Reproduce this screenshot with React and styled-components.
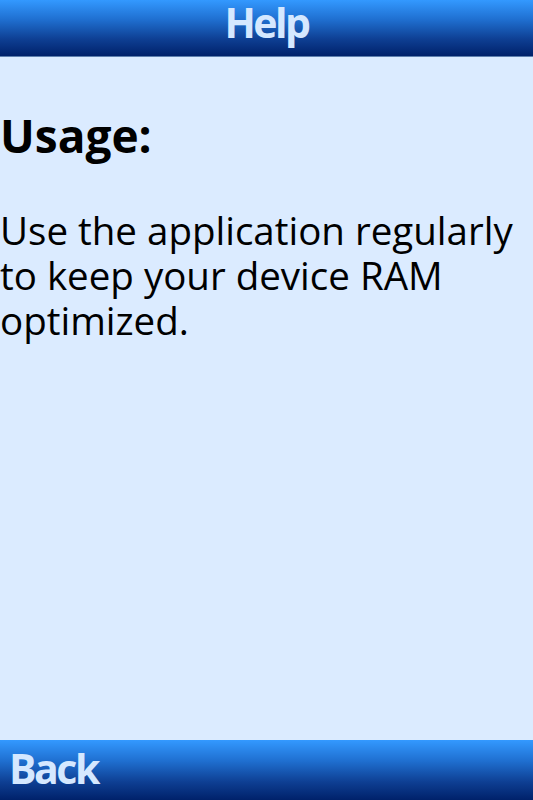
import React from 'react';
import styled, { createGlobalStyle } from 'styled-components';

const Global = createGlobalStyle`
  html, body { margin: 0; height: 100%; }
  body { background: #dbebff; font-family: "Open Sans", "DejaVu Sans", sans-serif; }
  #root { height: 100%; }
`;

const Screen = styled.div`
  display: flex;
  flex-direction: column;
  height: 100vh;
  background: #dbebff;
`;

const Bar = styled.div`
  display: flex;
  align-items: flex-start;
  justify-content: ${(p) => (p.$center ? 'center' : 'flex-start')};
  box-sizing: border-box;
  height: ${(p) => p.$h}px;
  padding: ${(p) => p.$top}px 9px 0;
  background: linear-gradient(to bottom, #3399ff 0%, #1f6fd0 35%, #0e3f93 70%, #00216a 100%);
  border-bottom: ${(p) => (p.$line ? '1px solid #5d7fae' : 'none')};
  flex-shrink: 0;
`;

const BarLabel = styled.span`
  font-family: "Open Sans", sans-serif;
  font-weight: 700;
  font-size: 41px;
  letter-spacing: -2.5px;
  line-height: 40px;
  color: #d5e8ff;
`;

const Content = styled.main`
  flex: 1;
  padding: 53px 0 0;
  color: #000;
`;

const Heading = styled.h2`
  margin: 0 0 48px;
  font-family: "Open Sans", sans-serif;
  font-weight: 700;
  font-size: 46px;
  line-height: 50px;
`;

const Body = styled.p`
  margin: 0;
  font-family: "Open Sans", sans-serif;
  font-weight: 500;
  font-size: 38.5px;
  line-height: 45px;
`;

export default function App() {
  return (
    <>
      <Global />
      <Screen>
        <Bar $h={57} $top={2} $center $line>
          <BarLabel>Help</BarLabel>
        </Bar>
        <Content>
          <Heading>Usage:</Heading>
          <Body>
            Use the application regularly
            <br />
            to keep your device RAM
            <br />
            optimized.
          </Body>
        </Content>
        <Bar $h={60} $top={8}>
          <BarLabel>Back</BarLabel>
        </Bar>
      </Screen>
    </>
  );
}
